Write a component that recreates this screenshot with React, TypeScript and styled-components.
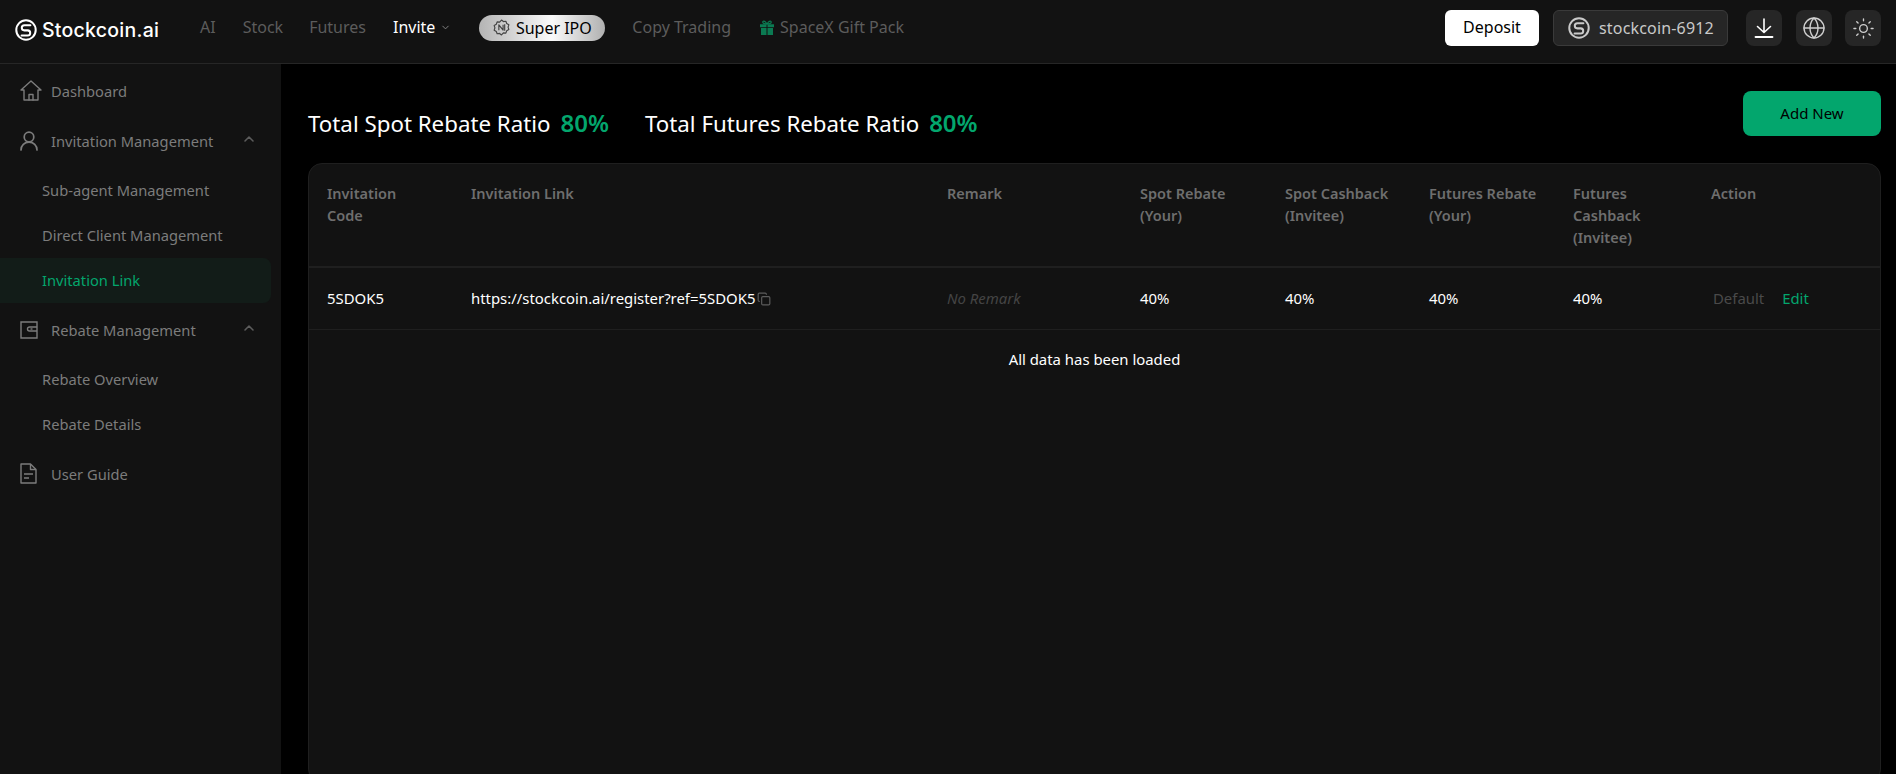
import React from "react";
import styled, { createGlobalStyle } from "styled-components";
import { Globe, Sun, ChevronDown, ChevronUp, Copy } from "lucide-react";

const Global = createGlobalStyle`
  html, body { margin: 0; padding: 0; background: #000; height: 100%; overflow: hidden; }
  body { font-family: "Noto Sans", "Open Sans", "Liberation Sans", sans-serif; color: #fff; }
  * { box-sizing: border-box; }
`;
const GREEN = "#03a66d";
const Page = styled.div`height: 774px; display: flex; flex-direction: column; overflow: hidden;`;
const Header = styled.header`
  height: 64px; flex: none; background: #121212; border-bottom: 1px solid #262626;
  display: flex; align-items: center; padding: 0 15px 7px 15px;
`;
const Brand = styled.div`display: flex; align-items: center; gap: 5px; width: 185px; flex: none; margin-top: 3px;`;
const BrandName = styled.span`font-family: "Inter", sans-serif; font-weight: 500; font-size: 19.5px; letter-spacing: 0.25px; color: #fff;`;
const Nav = styled.nav`display: flex; align-items: center; flex: 1; font-size: 16px;`;
const NavLink = styled.span<{ $active?: boolean; $gap: number }>`
  color: ${(p) => (p.$active ? "#fff" : "#5c5c5c")};
  margin-right: ${(p) => p.$gap}px;
  padding-bottom: 2px;
  display: inline-flex; align-items: center; gap: 5px; white-space: nowrap;
`;
const GiftLink = styled(NavLink)`gap: 6px;`;
const Pill = styled.span`
  width: 126px; height: 26px; border-radius: 13px; margin-right: 27px;
  background: linear-gradient(90deg, #b4b4b4 0%, #fafafa 58%, #b0b0b0 100%);
  color: #000; display: inline-flex; align-items: center; justify-content: center; gap: 6px;
  white-space: nowrap; padding-bottom: 1px;
`;
const Right = styled.div`display: flex; align-items: center;`;
const Deposit = styled.button`
  width: 94px; height: 36px; border: 0; border-radius: 6px; background: #fff; color: #000;
  font: inherit; font-size: 16px; margin-right: 14px; padding: 0 0 2px;
`;
const UserBox = styled.div`
  width: 175px; height: 36px; border-radius: 6px; background: #262626; border: 1px solid #3a3a3a;
  display: flex; align-items: center; gap: 9px; padding: 0 0 1px 14px; font-size: 16px; letter-spacing: 0.17px; color: #c9c9c9;
  margin-right: 18px; white-space: nowrap;
`;
const IconBtn = styled.div<{ $mr?: number }>`
  width: 36px; height: 36px; border-radius: 8px; background: #262626; display: flex;
  align-items: center; justify-content: center; color: #cfcfcf; margin-right: ${(p) => p.$mr ?? 0}px;
`;
const Body = styled.div`flex: 1; display: flex; min-height: 0;`;
const Side = styled.aside`width: 281px; flex: none; background: #121212; padding-top: 4px;`;
const SideTop = styled.div`
  height: 45px; display: flex; align-items: center; padding-left: 20px; color: #7c7c7c; font-size: 14.7px;
  position: relative;
`;
const SideIcon = styled.span`width: 31px; display: flex; align-items: center; flex: none; color: #7c7c7c;`;
const Caret = styled.span`position: absolute; left: 241px; top: 13px; color: #5c5c5c; display: flex;`;
const SubList = styled.div`margin-top: 5px;`;
const SideSub = styled.div<{ $active?: boolean }>`
  height: 45px; width: 271px; display: flex; align-items: center; padding: 0 0 2px 42px; font-size: 14.7px;
  border-radius: 0 8px 8px 0;
  color: ${(p) => (p.$active ? GREEN : "#7c7c7c")};
  background: ${(p) => (p.$active ? "#121c18" : "transparent")};
`;
const SideGroup = styled.div<{ $mt: number }>`margin-top: ${(p) => p.$mt}px;`;
const Main = styled.main`flex: 1; padding: 27px 15px 0 27px; min-width: 0;`;
const TopRow = styled.div`height: 72px; display: flex; justify-content: space-between;`;
const Totals = styled.div`display: flex; gap: 36px; padding-top: 17px; font-size: 22.3px; line-height: 30px; white-space: nowrap;`;
const Total = styled.div`display: flex; gap: 10px; align-items: baseline;`;
const Pct = styled.span`color: ${GREEN}; font-size: 24px; font-weight: 600;`;
const AddNew = styled.button`
  width: 138px; height: 45px; border: 0; border-radius: 8px; background: ${GREEN}; color: #000;
  font: inherit; font-size: 15px; padding: 0 0 2px;
`;
const Card = styled.section`
  height: 620px; background: #121212; border: 1px solid #1f1f1f; border-radius: 14px; overflow: hidden;
`;
const Cols = "144px 476px 193px 145px 144px 144px 138px 1fr";
const HeadRow = styled.div`
  display: grid; grid-template-columns: ${Cols}; height: 104px; padding: 18px 0 0 18px;
  border-bottom: 2px solid #1f1f1f; font-size: 14.5px; font-weight: 600; line-height: 22px; color: #6e6e6e;
`;
const HeadCell = styled.div`white-space: pre-line;`;
const DataRow = styled.div`
  display: grid; grid-template-columns: ${Cols}; height: 62px; align-items: center; padding: 0 0 2px 18px;
  border-bottom: 1px solid #1f1f1f; font-size: 14.9px; color: #fff;
`;
const Cell = styled.div`display: flex; align-items: center; white-space: nowrap;`;
const Muted = styled.span`color: #444; font-style: italic;`;
const CopyIcon = styled.span`display: inline-flex; color: #5c5c5c; margin-left: 2px; margin-top: 2px;`;
const ActionGray = styled.span`color: #4a4a4a; margin-right: 18px; margin-left: 2px;`;
const ActionGreen = styled.span`color: ${GREEN};`;
const Loaded = styled.div`text-align: center; font-size: 14.9px; padding-top: 18px; line-height: 22px; color: #fff;`;

const Logo = ({ size, color }: { size: number; color: string }) => (
  <svg width={size} height={size} viewBox="0 0 24 24" fill="none" stroke={color} strokeWidth="2.2" strokeLinecap="round">
    <circle cx="12" cy="12" r="10.6" />
    <path d="M16.8 6.8H10.2a2.8 2.8 0 0 0 0 5.6h3.6a2.8 2.8 0 0 1 0 5.6H7.2" />
  </svg>
);
const IpoIcon = () => (
  <svg width="17" height="17" viewBox="0 0 16 16" fill="none" stroke="#444" strokeWidth="1.1" strokeLinejoin="round">
    <path d="M8 1l1.8 1.4 2.3-.3.8 2.2 2 1.2-.7 2.2.7 2.2-2 1.2-.8 2.2-2.3-.3L8 15l-1.8-1.4-2.3.3-.8-2.2-2-1.2.7-2.2-.7-2.2 2-1.2.8-2.2 2.3.3z" />
    <path d="M5.5 10.5v-5l4 5v-5M11 5v6" />
  </svg>
);
const GiftIcon = () => (
  <svg width="14" height="15" viewBox="0 0 14 15">
    <path d="M0 4.2h14v3H0zM1 8h12v7H1z" fill="#0b7a52" />
    <path d="M7 4V15" stroke="#121212" strokeWidth="1" />
    <path d="M7 4C5 .5 2.5.5 2.8 2.4 3 3.6 5 4 7 4c2 0 4-.4 4.2-1.6C11.5.5 9 .5 7 4z" fill="none" stroke="#0b7a52" strokeWidth="1.2" />
  </svg>
);
const DownloadIcon = () => (
  <svg width="22" height="22" viewBox="0 0 22 22" fill="none" stroke="#fff" strokeWidth="1.6" strokeLinecap="round" strokeLinejoin="round">
    <path d="M11 2v13M4.5 9.5 11 15.5l6.5-6" />
    <path d="M2.5 20h17" strokeWidth="1.8" />
  </svg>
);
const HomeIcon = () => (
  <svg width="22" height="21" viewBox="0 0 22 21" fill="none" stroke="currentColor" strokeWidth="1.4" strokeLinejoin="round" strokeLinecap="round">
    <path d="M1 10 11 1l10 9h-3v10H4V10z" />
    <path d="M9 20v-5.5h4V20" />
  </svg>
);
const UserIcon = () => (
  <svg width="18" height="20" viewBox="0 0 18 20" fill="none" stroke="currentColor" strokeWidth="1.7" strokeLinecap="round">
    <circle cx="9" cy="6" r="4.8" />
    <path d="M1 19c0-4.5 3.5-7.8 8-7.8s8 3.3 8 7.8" />
  </svg>
);
const WalletIcon = () => (
  <svg width="18" height="18" viewBox="0 0 18 18" fill="none" stroke="currentColor" strokeWidth="1.4">
    <path d="M17 1H1v16h16z" />
    <path d="M17 6h-7.5a1.7 1.7 0 0 0 0 4H17" />
    <path d="M10.5 8h2" />
  </svg>
);
const DocIcon = () => (
  <svg width="17" height="21" viewBox="0 0 17 21" fill="none" stroke="currentColor" strokeWidth="1.4" strokeLinejoin="round">
    <path d="M1 1h9.5L16 6.5V20H1z" />
    <path d="M10.5 1v5.5H16" />
    <path d="M4 11h9M4 15h5" />
  </svg>
);

const heads = ["Invitation\nCode", "Invitation Link", "Remark", "Spot Rebate\n(Your)", "Spot Cashback\n(Invitee)", "Futures Rebate\n(Your)", "Futures\nCashback\n(Invitee)", "Action"];

export default function App() {
  return (
    <Page>
      <Global />
      <Header>
        <Brand>
          <Logo size={22} color="#fff" />
          <BrandName>Stockcoin.ai</BrandName>
        </Brand>
        <Nav>
          <NavLink $gap={27}>AI</NavLink>
          <NavLink $gap={26}>Stock</NavLink>
          <NavLink $gap={27}>Futures</NavLink>
          <NavLink $active $gap={28}>Invite <ChevronDown size={11} color="#8a8a8a" /></NavLink>
          <Pill><IpoIcon />Super IPO</Pill>
          <NavLink $gap={29}>Copy Trading</NavLink>
          <GiftLink $gap={0}><GiftIcon />SpaceX Gift Pack</GiftLink>
        </Nav>
        <Right>
          <Deposit>Deposit</Deposit>
          <UserBox><Logo size={22} color="#c9c9c9" />stockcoin-6912</UserBox>
          <IconBtn $mr={14}><DownloadIcon /></IconBtn>
          <IconBtn $mr={13}><Globe size={24} strokeWidth={1.4} /></IconBtn>
          <IconBtn><Sun size={23} strokeWidth={1.4} /></IconBtn>
        </Right>
      </Header>
      <Body>
        <Side>
          <SideTop><SideIcon><HomeIcon /></SideIcon>Dashboard</SideTop>
          <SideGroup $mt={5}>
            <SideTop><SideIcon><UserIcon /></SideIcon>Invitation Management<Caret><ChevronUp size={16} strokeWidth={2.4} /></Caret></SideTop>
            <SubList>
              <SideSub>Sub-agent Management</SideSub>
              <SideSub>Direct Client Management</SideSub>
              <SideSub $active>Invitation Link</SideSub>
            </SubList>
          </SideGroup>
          <SideGroup $mt={4}>
            <SideTop><SideIcon><WalletIcon /></SideIcon>Rebate Management<Caret><ChevronUp size={16} strokeWidth={2.4} /></Caret></SideTop>
            <SubList>
              <SideSub>Rebate Overview</SideSub>
              <SideSub>Rebate Details</SideSub>
            </SubList>
          </SideGroup>
          <SideGroup $mt={4}>
            <SideTop><SideIcon><DocIcon /></SideIcon>User Guide</SideTop>
          </SideGroup>
        </Side>
        <Main>
          <TopRow>
            <Totals>
              <Total>Total Spot Rebate Ratio <Pct>80%</Pct></Total>
              <Total>Total Futures Rebate Ratio <Pct>80%</Pct></Total>
            </Totals>
            <AddNew>Add New</AddNew>
          </TopRow>
          <Card>
            <HeadRow>{heads.map((h) => <HeadCell key={h}>{h}</HeadCell>)}</HeadRow>
            <DataRow>
              <Cell>5SDOK5</Cell>
              <Cell>https://stockcoin.ai/register?ref=5SDOK5<CopyIcon><Copy size={14} /></CopyIcon></Cell>
              <Cell><Muted>No Remark</Muted></Cell>
              <Cell>40%</Cell>
              <Cell>40%</Cell>
              <Cell>40%</Cell>
              <Cell>40%</Cell>
              <Cell><ActionGray>Default</ActionGray><ActionGreen>Edit</ActionGreen></Cell>
            </DataRow>
            <Loaded>All data has been loaded</Loaded>
          </Card>
        </Main>
      </Body>
    </Page>
  );
}
